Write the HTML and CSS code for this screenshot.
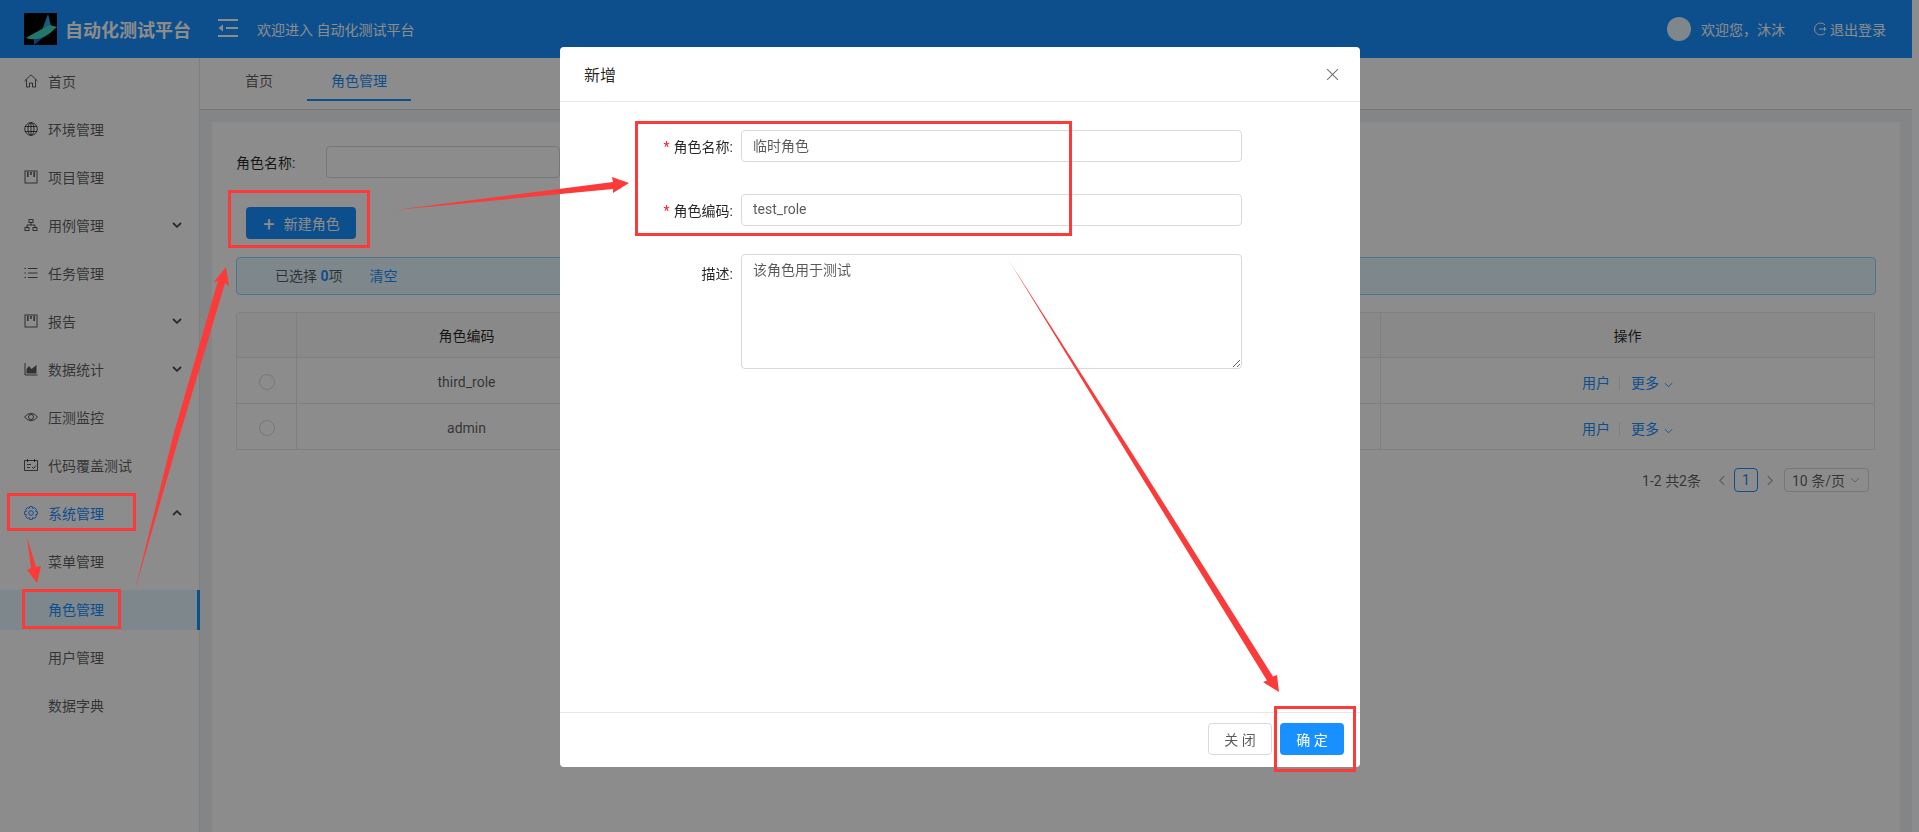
FILE: index.html
```html
<!DOCTYPE html>
<html>
<head>
    <meta charset="UTF-8">
    <title>角色管理</title>
    <link rel="stylesheet" href="styles.css">
</head>
<body>
    <div class="app">
        <header class="topbar">
            <svg class="logo" viewBox="0 0 33 32">
                <rect width="33" height="32" fill="#000"/>
                <path d="M18 17L24 1L27 13Z" fill="#2aa6e0"/>
                <path d="M10 26L20 24L10 32Z" fill="#2a62d8"/>
                <path d="M2 25Q12 19 18 16L26 12L33 14Q27 20 20 24Q10 28 2 25Z" fill="#3fd9c0"/>
            </svg>
            <span class="brand">自动化测试平台</span>
            <svg class="collapse" viewBox="0 0 20 18" fill="none" stroke="#fff" stroke-width="2">
                <path d="M0 1H20M8 9H20M0 17H20"/>
                <path d="M5 5.500V12.500L0.500 9Z" fill="#fff" stroke="none"/>
            </svg>
            <span class="welcome">欢迎进入 自动化测试平台</span>
            <div class="user">
                <span class="avatar"></span>
                <span class="user-name">欢迎您，沐沐</span>
                <svg class="logout-icon" viewBox="0 0 14 14" fill="none" stroke="#fff" stroke-width="1">
                    <path d="M12 3A6 6 0 1 0 12 11M6 7H13.500M11.500 5V9"/>
                </svg>
                <span>退出登录</span>
            </div>
        </header>

        <div class="layout">
            <nav class="sidebar">
                <a class="nav-item">
                    <svg class="nav-icon" viewBox="0 0 14 14"><path d="M0.500 7L7 0.800L13.500 7M2.500 5.500V13H5.500V9H8.500V13H11.500V5.500"/></svg>
                    首页
                </a>
                <a class="nav-item">
                    <svg class="nav-icon" viewBox="0 0 14 14"><circle cx="7" cy="7" r="6.300"/><ellipse cx="7" cy="7" rx="3" ry="6.300"/><path d="M1 4.500H13M1 9.500H13M7 0.700V13.300"/></svg>
                    环境管理
                </a>
                <a class="nav-item">
                    <svg class="nav-icon" viewBox="0 0 14 14"><rect x="1" y="1" width="12" height="12"/><path d="M3.800 2V7M7 2V5M10.200 2V7" stroke-width="1.600"/></svg>
                    项目管理
                </a>
                <a class="nav-item">
                    <svg class="nav-icon" viewBox="0 0 14 14"><rect x="5" y="1.500" width="4" height="3"/><rect x="1" y="9.500" width="4" height="3"/><rect x="9" y="9.500" width="4" height="3"/><path d="M7 4.500V7M3 9.500V7H11V9.500"/></svg>
                    用例管理
                    <svg class="nav-arrow" viewBox="0 0 10 6"><path d="M1 1L5 4.800L9 1"/></svg>
                </a>
                <a class="nav-item">
                    <svg class="nav-icon" viewBox="0 0 14 14"><path d="M4 2.500H13.500M4 7H13.500M4 11.500H13.500M0.500 2.500H2M0.500 7H2M0.500 11.500H2"/></svg>
                    任务管理
                </a>
                <a class="nav-item">
                    <svg class="nav-icon" viewBox="0 0 14 14"><rect x="1" y="1" width="12" height="12"/><path d="M3.800 2V7M7 2V5M10.200 2V7" stroke-width="1.600"/></svg>
                    报告
                    <svg class="nav-arrow" viewBox="0 0 10 6"><path d="M1 1L5 4.800L9 1"/></svg>
                </a>
                <a class="nav-item">
                    <svg class="nav-icon" viewBox="0 0 14 14"><path d="M1 1V13H13.500"/><path class="solid" d="M2.500 11.500V7L5 4L7.500 7L10 5L12.500 3V11.500Z"/></svg>
                    数据统计
                    <svg class="nav-arrow" viewBox="0 0 10 6"><path d="M1 1L5 4.800L9 1"/></svg>
                </a>
                <a class="nav-item">
                    <svg class="nav-icon" viewBox="0 0 14 14"><path d="M0.500 7Q7 -0.500 13.500 7Q7 14.500 0.500 7Z"/><circle cx="7" cy="7" r="2.500"/></svg>
                    压测监控
                </a>
                <a class="nav-item">
                    <svg class="nav-icon" viewBox="0 0 14 14"><path d="M0.500 2.500H13.500V12.500H0.500ZM3.500 1V4M10.500 1V4M3 6.500H7M3 9.500H6M8 9L9.500 10.500L12 7.500"/></svg>
                    代码覆盖测试
                </a>
                <a class="nav-item is-open">
                    <svg class="nav-icon" viewBox="0 0 14 14"><path d="M5.700 0.600H8.300L8.800 2.500L10.600 1.600L12.400 3.400L11.500 5.200L13.400 5.700V8.300L11.500 8.800L12.400 10.600L10.600 12.400L8.800 11.500L8.300 13.400H5.700L5.200 11.500L3.400 12.400L1.600 10.600L2.500 8.800L0.600 8.300V5.700L2.500 5.200L1.600 3.400L3.400 1.600L5.200 2.500Z"/><circle cx="7" cy="7" r="2.300"/></svg>
                    系统管理
                    <svg class="nav-arrow" viewBox="0 0 10 6"><path d="M1 5L5 1.200L9 5"/></svg>
                </a>
                <a class="nav-item nav-sub">菜单管理</a>
                <a class="nav-item nav-sub is-selected">角色管理</a>
                <a class="nav-item nav-sub">用户管理</a>
                <a class="nav-item nav-sub">数据字典</a>
            </nav>

            <main class="main">
                <div class="tabs">
                    <span class="tab">首页</span>
                    <span class="tab tab-active">角色管理</span>
                </div>
                <div class="content">
                    <section class="card">
                        <div class="search-row">
                            <label class="search-label">角色名称:</label>
                            <input class="search-input" type="text">
                        </div>
                        <button class="btn-new" type="button"><span class="plus">+</span>新建角色</button>
                        <div class="alert">已选择 <b>0</b>项<a class="alert-clear">清空</a></div>
                        <table class="grid">
                            <colgroup>
                                <col class="col-check"><col class="col-code"><col class="col-name"><col class="col-ops">
                            </colgroup>
                            <thead>
                                <tr><th></th><th>角色编码</th><th></th><th>操作</th></tr>
                            </thead>
                            <tbody>
                                <tr>
                                    <td><span class="radio"></span></td>
                                    <td>third_role</td>
                                    <td></td>
                                    <td><a class="link">用户</a><span class="split"></span><a class="link">更多</a><svg class="more-arrow" viewBox="0 0 10 6"><path d="M1 1L5 5L9 1"/></svg></td>
                                </tr>
                                <tr>
                                    <td><span class="radio"></span></td>
                                    <td>admin</td>
                                    <td></td>
                                    <td><a class="link">用户</a><span class="split"></span><a class="link">更多</a><svg class="more-arrow" viewBox="0 0 10 6"><path d="M1 1L5 5L9 1"/></svg></td>
                                </tr>
                            </tbody>
                        </table>
                        <div class="pager">
                            <span class="pager-total">1-2 共2条</span>
                            <svg class="pager-arrow" viewBox="0 0 6 10"><path d="M5 1L1 5L5 9"/></svg>
                            <span class="pager-num">1</span>
                            <svg class="pager-arrow" viewBox="0 0 6 10"><path d="M1 1L5 5L1 9"/></svg>
                            <span class="pager-size">10 条/页<svg class="size-arrow" viewBox="0 0 10 6"><path d="M1 1L5 5L9 1"/></svg></span>
                        </div>
                    </section>
                </div>
            </main>
        </div>
    </div>

    <div class="mask"></div>

    <div class="modal">
        <div class="modal-head">
            <span class="modal-title">新增</span>
            <svg class="modal-close" viewBox="0 0 12 12"><path d="M1 1L11 11M11 1L1 11"/></svg>
        </div>
        <form class="modal-body">
            <label class="form-label"><i>*</i>角色名称:</label>
            <input class="form-input" type="text" value="临时角色">
            <label class="form-label"><i>*</i>角色编码:</label>
            <input class="form-input" type="text" value="test_role">
            <label class="form-label label-top">描述:</label>
            <textarea class="form-area">该角色用于测试</textarea>
        </form>
        <div class="modal-foot">
            <button class="btn-close" type="button">关 闭</button>
            <button class="btn-ok" type="button">确 定</button>
        </div>
    </div>

    <!-- red marks drawn on top of the screenshot -->
    <svg class="marks" viewBox="0 0 1919 832">
        <rect x="229.500" y="191.500" width="139" height="55"/>
        <rect x="8.500" y="494.500" width="126" height="35"/>
        <rect x="23.500" y="590.500" width="96" height="37"/>
        <rect x="636.500" y="122.500" width="434" height="112"/>
        <rect x="1275.500" y="707.500" width="79" height="63"/>
        <polygon points="395,210 613,182 612,177 629,183 613,193 613,189"/>
        <polygon points="135,590 173.600,434 218,281 214,282 226,267 229,286 225,283 179.400,436"/>
        <polygon points="27,537 31,568 27,570 37,583 41,566 36,567"/>
        <polygon points="1008,259 1142,468.700 1273,676.600 1277,675 1279,692 1263,682 1267,680.400 1138,471.300"/>
    </svg>
</body>
</html>
```

FILE: styles.css
```css
* {
    box-sizing: border-box;
}

html, body {
    height: 832px;
    margin: 0;
    overflow: hidden;
}

body {
    background: #fff;
    color: rgba(0, 0, 0, 0.65);
    font-family: Roboto, "Noto Sans CJK SC", sans-serif;
    font-size: 14px;
}

input, textarea, button {
    font-family: inherit;
    font-size: 14px;
}

.app {
    width: 1912px;
    height: 832px;
    display: flex;
    flex-direction: column;
}

/* top bar */

.topbar {
    height: 58px;
    flex: none;
    display: flex;
    align-items: center;
    padding: 0 26px 0 24px;
    background: #1890ff;
    color: #fff;
}

.logo {
    width: 33px;
    height: 32px;
}

.brand {
    margin-left: 8px;
    font-size: 18px;
    font-weight: 700;
}

.collapse {
    width: 20px;
    height: 18px;
    margin: -2px 0 0 27px;
}

.welcome {
    margin: -1px 0 0 19px;
}

.user {
    margin-left: auto;
    display: flex;
    align-items: center;
}

.avatar {
    width: 24px;
    height: 24px;
    margin-right: 10px;
    border-radius: 50%;
    background: #e6f7ff;
}

.logout-icon {
    width: 14px;
    height: 14px;
    margin: 0 3px 0 28px;
}

/* sidebar */

.layout {
    flex: 1;
    display: flex;
    min-height: 0;
}

.sidebar {
    width: 200px;
    flex: none;
    padding-top: 4px;
    background: #fff;
    border-right: 1px solid #e8e8e8;
}

.nav-item {
    height: 40px;
    margin-bottom: 8px;
    display: flex;
    align-items: center;
    padding-left: 24px;
    padding-bottom: 2px;
}

.nav-icon {
    width: 14px;
    height: 14px;
    margin-right: 10px;
    fill: none;
    stroke: rgba(0, 0, 0, 0.65);
    stroke-width: 1;
}

.nav-icon .solid {
    fill: rgba(0, 0, 0, 0.65);
    stroke: none;
}

.nav-arrow {
    width: 10px;
    height: 6px;
    margin-left: auto;
    margin-right: 17px;
    fill: none;
    stroke: rgba(0, 0, 0, 0.7);
    stroke-width: 1.800;
}

.nav-sub {
    padding-left: 48px;
}

.is-open {
    color: #1890ff;
}

.is-open .nav-icon {
    stroke: #1890ff;
}

.is-selected {
    margin-right: -1px;
    background: #e6f7ff;
    border-right: 3px solid #1890ff;
    color: #1890ff;
}

/* tabs and page */

.main {
    flex: 1;
    min-width: 0;
    display: flex;
    flex-direction: column;
}

.tabs {
    height: 52px;
    flex: none;
    display: flex;
    padding-left: 21px;
    background: #fff;
    border-bottom: 1px solid #d9d9d9;
}

.tab {
    height: 43px;
    margin-right: 10px;
    padding: 0 24px;
    line-height: 46px;
}

.tab-active {
    border-bottom: 2px solid #1890ff;
    color: #1890ff;
}

.content {
    flex: 1;
    padding: 12px 12px 0;
    background: #f0f2f5;
}

.card {
    height: 100%;
    padding: 24px 24px 0;
    background: #fff;
}

.search-row {
    display: flex;
    align-items: center;
    height: 32px;
}

.search-label {
    width: 90px;
    color: rgba(0, 0, 0, 0.85);
}

.search-input {
    width: 234px;
    height: 32px;
    border: 1px solid #d9d9d9;
    border-radius: 4px;
}

.btn-new {
    display: block;
    width: 110px;
    height: 32px;
    margin: 29px 0 18px 10px;
    padding: 0 0 0 1px;
    border: 0;
    border-radius: 4px;
    background: #1890ff;
    color: #fff;
}

.plus {
    margin-right: 9px;
    font-size: 20px;
    font-weight: 400;
    line-height: 1;
    vertical-align: -2px;
}

.alert {
    height: 38px;
    padding-left: 38px;
    line-height: 36px;
    background: #e6f7ff;
    border: 1px solid #91d5ff;
    border-radius: 4px;
}

.alert b {
    color: #1890ff;
}

.alert-clear {
    margin-left: 27px;
    color: #1890ff;
}

/* table */

.grid {
    width: 1639px;
    margin-top: 17px;
    table-layout: fixed;
    border-collapse: separate;
    border-spacing: 0;
    border-top: 1px solid #e8e8e8;
    border-left: 1px solid #e8e8e8;
    border-radius: 4px 4px 0 0;
}

.col-check { width: 60px; }
.col-code { width: 340px; }
.col-name { width: 744px; }

.grid th, .grid td {
    height: 46px;
    padding: 0;
    text-align: center;
    border-right: 1px solid #e8e8e8;
    border-bottom: 1px solid #e8e8e8;
}

.grid th {
    height: 45px;
    background: #fafafa;
    color: rgba(0, 0, 0, 0.85);
    font-weight: 400;
}

.grid td {
    padding-top: 3px;
}

.radio {
    display: block;
    width: 16px;
    height: 16px;
    margin: 0 auto;
    border: 1px solid #d9d9d9;
    border-radius: 50%;
}

.link {
    color: #1890ff;
}

.split {
    display: inline-block;
    width: 1px;
    height: 14px;
    margin: 0 11px 0 9px;
    vertical-align: -2px;
    background: #e8e8e8;
}

.more-arrow {
    width: 9px;
    height: 6px;
    margin-left: 5px;
    fill: none;
    stroke: #1890ff;
    stroke-width: 1;
}

/* pager */

.pager {
    display: flex;
    align-items: center;
    justify-content: flex-end;
    height: 24px;
    margin: 18px 7px 0 0;
}

.pager-total {
    margin-right: 17px;
}

.pager-arrow {
    width: 8px;
    height: 11px;
    fill: none;
    stroke: rgba(0, 0, 0, 0.35);
    stroke-width: 1;
}

.pager-num {
    width: 24px;
    height: 24px;
    margin: 0 8px;
    line-height: 22px;
    text-align: center;
    color: #1890ff;
    border: 1px solid #1890ff;
    border-radius: 4px;
}

.pager-size {
    display: flex;
    align-items: center;
    width: 85px;
    height: 24px;
    margin-left: 10px;
    padding-left: 7px;
    border: 1px solid #d9d9d9;
    border-radius: 4px;
}

.size-arrow {
    width: 10px;
    height: 6px;
    margin-left: 5px;
    fill: none;
    stroke: rgba(0, 0, 0, 0.3);
    stroke-width: 1;
}

/* modal */

.mask {
    position: fixed;
    inset: 0;
    background: rgba(0, 0, 0, 0.45);
}

.modal {
    position: fixed;
    left: 560px;
    top: 47px;
    width: 800px;
    height: 720px;
    display: flex;
    flex-direction: column;
    background: #fff;
    border-radius: 4px;
}

.modal-head {
    height: 55px;
    flex: none;
    display: flex;
    align-items: center;
    justify-content: space-between;
    padding: 0 24px;
    border-bottom: 1px solid #e8e8e8;
}

.modal-title {
    font-size: 16px;
    color: rgba(0, 0, 0, 0.85);
}

.modal-close {
    width: 13px;
    height: 13px;
    margin-right: -3px;
    stroke: rgba(0, 0, 0, 0.55);
    stroke-width: 1;
}

.modal-body {
    flex: 1;
    display: grid;
    grid-template-columns: 181px 501px;
    grid-template-rows: 32px 32px 115px;
    row-gap: 32px;
    align-content: start;
    padding-top: 28px;
}

.form-label {
    align-self: center;
    padding-right: 8px;
    padding-bottom: 1px;
    text-align: right;
    color: rgba(0, 0, 0, 0.85);
}

.form-label i {
    margin-right: 4px;
    color: #f5222d;
    font-style: normal;
}

.label-top {
    align-self: start;
    margin-top: 5px;
}

.form-input, .form-area {
    width: 501px;
    padding: 0 11px;
    color: rgba(0, 0, 0, 0.65);
    border: 1px solid #d9d9d9;
    border-radius: 4px;
}

.form-input {
    height: 32px;
    padding-bottom: 2px;
}

.form-area {
    height: 115px;
    margin-top: -4px;
    padding-top: 4px;
    line-height: 22px;
}

.modal-foot {
    height: 55px;
    flex: none;
    display: flex;
    justify-content: flex-end;
    gap: 8px;
    padding: 10px 16px 12px;
    border-top: 1px solid #e8e8e8;
}

.btn-close, .btn-ok {
    width: 64px;
    height: 32px;
    padding: 0;
    border-radius: 4px;
}

.btn-close {
    background: #fff;
    color: rgba(0, 0, 0, 0.65);
    border: 1px solid #d9d9d9;
}

.btn-ok {
    background: #1890ff;
    color: #fff;
    border: 0;
}

/* annotations */

.marks {
    position: fixed;
    left: 0;
    top: 0;
    width: 1919px;
    height: 832px;
}

.marks rect {
    fill: none;
    stroke: #fb3a3a;
    stroke-width: 3;
}

.marks polygon {
    fill: #fb3a3a;
}
```
